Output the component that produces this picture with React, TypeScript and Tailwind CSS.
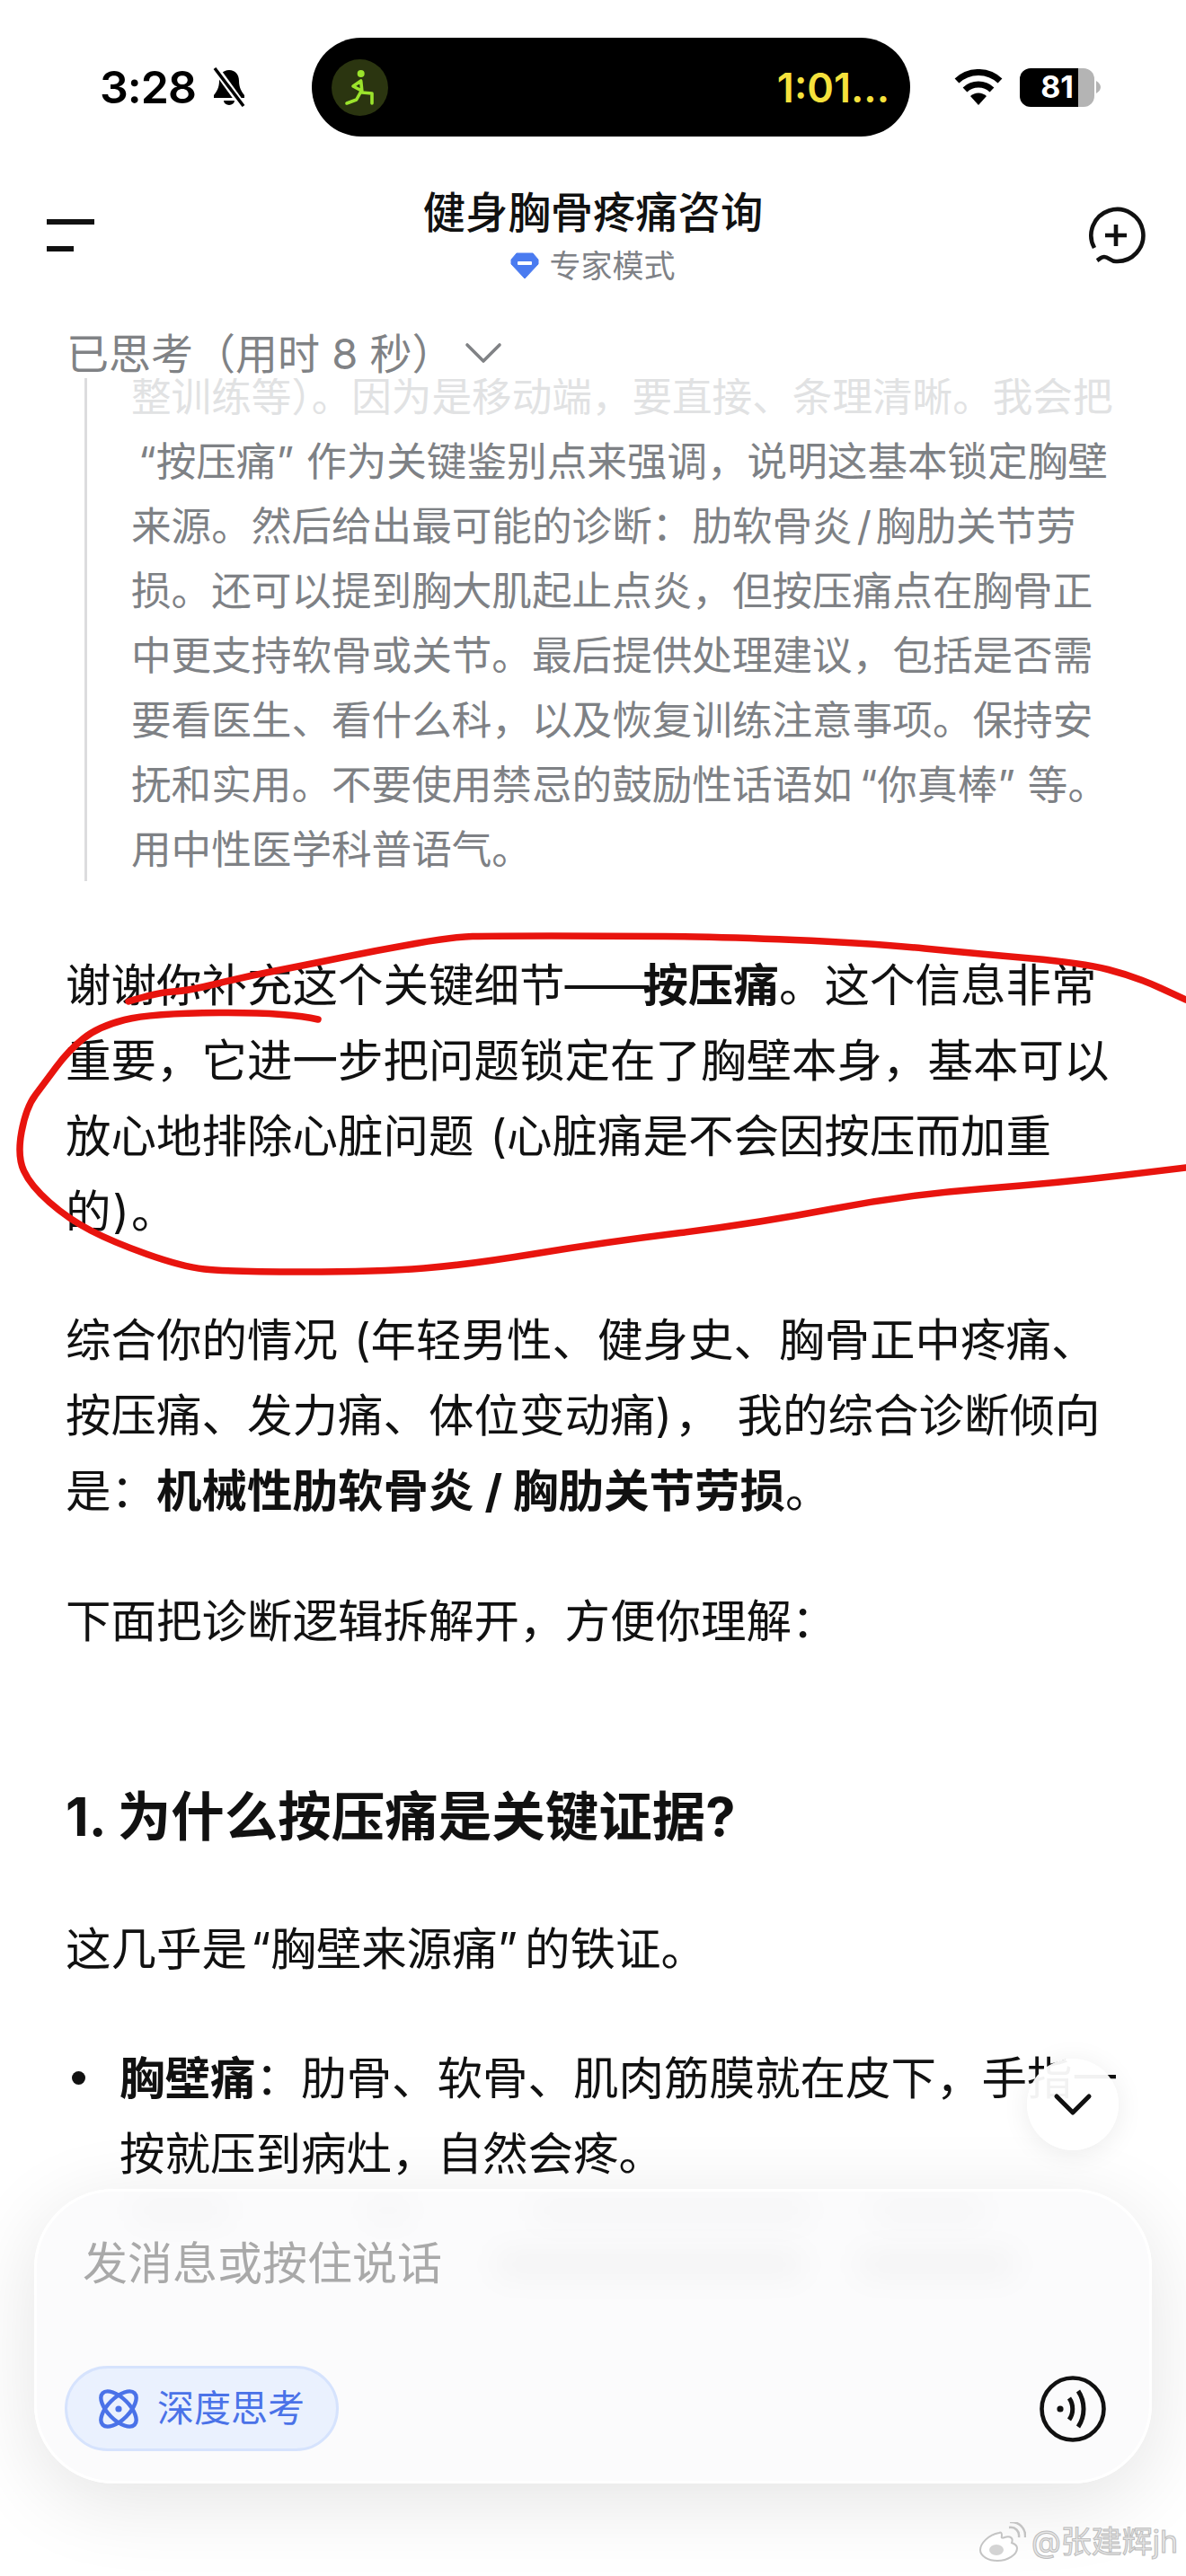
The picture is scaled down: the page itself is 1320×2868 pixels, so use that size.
import type { ReactNode } from 'react';
import { ChevronDown } from 'lucide-react';

const FONT = '[font-family:Inter,"Noto_Sans_CJK_SC",sans-serif]';

// quotes and brackets sit tighter/looser than the fallback font sets them
const Open = () => <span className="ml-[8px]">“</span>;
const Close = () => <span className="mr-[14px]">”</span>;
const Paren = () => <span className="ml-[18px]">(</span>;

const thinkingLines: ReactNode[] = [
  <span className="text-[#e1e2e3]">整训练等）。因为是移动端，要直接、条理清晰。我会把</span>,
  <><Open />按压痛<Close />作为关键鉴别点来强调，说明这基本锁定胸壁</>,
  <>来源。然后给出最可能的诊断：肋软骨炎<span className="mx-[5px]">/</span>胸肋关节劳</>,
  '损。还可以提到胸大肌起止点炎，但按压痛点在胸骨正',
  '中更支持软骨或关节。最后提供处理建议，包括是否需',
  '要看医生、看什么科，以及恢复训练注意事项。保持安',
  <>抚和实用。不要使用禁忌的鼓励性话语如<Open />你真棒<Close />等。</>,
  '用中性医学科普语气。',
];

// hand-traced pen strokes on top of the screenshot
const inkA = [[143, 1115], [175, 1105], [210, 1103], [270, 1088], [337, 1075], [420, 1058], [505, 1043], [547, 1042], [680, 1042], [800, 1043], [968, 1050], [1090, 1062], [1204, 1072], [1263, 1087], [1320, 1113]];
const inkB = [[354, 1135], [320, 1127], [168, 1128], [109, 1143], [76, 1170], [50, 1205], [29, 1233], [19, 1287], [34, 1320], [76, 1357], [126, 1383], [202, 1410], [253, 1416], [421, 1416], [522, 1408], [673, 1383], [842, 1362], [1010, 1330], [1178, 1317], [1320, 1300]];

function smooth(points: number[][]) {
  let d = `M${points[0][0]} ${points[0][1]}`;
  for (let i = 1; i < points.length - 1; i++) {
    const mx = (points[i][0] + points[i + 1][0]) / 2;
    const my = (points[i][1] + points[i + 1][1]) / 2;
    d += ` Q${points[i][0]} ${points[i][1]} ${mx} ${my}`;
  }
  const last = points[points.length - 1];
  return `${d} L${last[0]} ${last[1]}`;
}

function StatusBar() {
  return (
    <div className="mt-[42px] flex h-[110px] items-center pl-[111px]">
      <div className="flex w-[236px] items-center gap-[16px]">
        <span className="text-[50px] font-semibold leading-none tracking-[-1px] text-black">3:28</span>
        <svg width="42" height="44" viewBox="0 0 42 44">
          <path d="M21 3c-7 0-11 5-11 12 0 8-3 12-6 16v3h34v-3c-3-4-6-8-6-16 0-7-4-12-11-12z" fill="#000" />
          <path d="M15 37h12a6 5 0 0 1-12 0z" fill="#000" />
          <path d="M5 0l32 44" stroke="#fff" strokeWidth="8" />
          <path d="M5 1l32 42" stroke="#000" strokeWidth="3.5" />
        </svg>
      </div>
      <div className="flex h-[110px] w-[666px] items-center justify-between rounded-[55px] bg-black pl-[22px] pr-[23px]">
        <svg width="63" height="63" viewBox="0 0 63 63">
          <circle cx="31.5" cy="31.5" r="31.5" fill="#2b3510" />
          <circle cx="32.7" cy="16" r="4" fill="#9be32c" />
          <path d="M32.7 24L24 30l7.5 4M32.7 24L34 37M32.7 36L27.7 45 17 49M34 37l11 1v11" fill="none" stroke="#9be32c" strokeWidth="3.6" strokeLinecap="round" strokeLinejoin="round" />
        </svg>
        <span className="text-[45px] font-semibold leading-none text-[#f5e13c]">1:01...</span>
      </div>
      <div className="ml-[49px] flex items-center gap-[19px]">
        <svg width="54" height="40" viewBox="0 0 54 40">
          <path d="M3 13a35 35 0 0 1 48 0" fill="none" stroke="#000" strokeWidth="7" />
          <path d="M12 23a22 22 0 0 1 30 0" fill="none" stroke="#000" strokeWidth="7" />
          <path d="M18 30a13 13 0 0 1 18 0L27 40z" fill="#000" />
        </svg>
        <div className="flex items-center gap-[2px]">
          <div className="flex h-[43px] w-[83px] overflow-hidden rounded-[12px]">
            <div className="flex w-[65px] items-center justify-end bg-black pr-[5px] text-[34px] font-bold leading-none text-white">81</div>
            <div className="w-[18px] bg-[#b4b4b4]" />
          </div>
          <svg width="5" height="14" viewBox="0 0 5 14"><path d="M0 0c3 2 5 4 5 7s-2 5-5 7z" fill="#b4b4b4" /></svg>
        </div>
      </div>
    </div>
  );
}

function Header() {
  return (
    <div className="mt-[55px] grid grid-cols-[1fr_auto_1fr] items-center px-[42px]">
      <div className="ml-[10px] flex flex-col gap-[24px]">
        <div className="h-[6px] w-[53px] bg-[#111]" />
        <div className="h-[6px] w-[30px] bg-[#111]" />
      </div>
      <div className="flex flex-col items-center">
        <div className="text-[47.3px] font-medium leading-[60px] text-[#111]">健身胸骨疼痛咨询</div>
        <div className="mt-[9px] flex h-[40px] items-center gap-[11px]">
          <svg width="32" height="30" viewBox="0 0 32 30">
            <path d="M7 1h18l6 7v5L16 29 1 13V8z" fill="#4a7bf0" stroke="#4a7bf0" strokeLinejoin="round" />
            <rect x="8" y="10" width="16" height="4" rx="1" fill="#fff" />
          </svg>
          <span className="text-[35px] leading-none text-[#7f8287]">专家模式</span>
        </div>
      </div>
      <div className="flex justify-end">
        <svg width="72" height="72" viewBox="0 0 72 72" fill="none" stroke="#111" strokeWidth="4.6">
          <path d="M12 50A29 29 0 1 1 36 65C30 65 28 60 23 60C20 60 18 62 15 64" />
          <path d="M36 24v24M24 36h24" />
        </svg>
      </div>
    </div>
  );
}

function Thinking() {
  return (
    <>
      <div className="mt-[49px] flex h-[56px] items-center pl-[74px] text-[#808285]">
        <span className="text-[47px] leading-none">已思考（用时 8 秒）</span>
        <ChevronDown size={72} strokeWidth={1.2} className="-my-[8px] -ml-[4px]" />
      </div>
      <div className="relative ml-[94px] h-[560px] overflow-hidden border-l-[3px] border-[#dcdcde] pl-[49px]">
        <div className="-mt-[15px] text-[44.6px] leading-[72px] text-[#7e8185]">
          {thinkingLines.map((line, i) => (
            <div key={i} className="whitespace-nowrap">{line}</div>
          ))}
        </div>
        <div className="absolute -left-[3px] top-0 h-[75px] w-[3px] bg-gradient-to-b from-white to-white/0" />
      </div>
    </>
  );
}

function Answer() {
  const para = 'text-[50.5px] leading-[84px] text-[#111] whitespace-nowrap';
  return (
    <div className="px-[73px]">
      <p className={`mt-[74px] ${para}`}>
        谢谢你补充这个关键细节<span className="tracking-[-7px]">——</span><b className="font-bold">按压痛</b>。这个信息非常<br />
        重要，它进一步把问题锁定在了胸壁本身，基本可以<br />
        放心地排除心脏问题<Paren />心脏痛是不会因按压而加重<br />
        的<span className="ml-[2px] mr-[2px]">)</span>。
      </p>
      <p className={`mt-[59px] ${para}`}>
        综合你的情况<Paren />年轻男性、健身史、胸骨正中疼痛、<br />
        按压痛、发力痛、体位变动痛<span className="mr-[3px]">)</span>，<span className="ml-[19px]">我的综合诊断倾向</span><br />
        是：<b className="font-bold">机械性肋软骨炎 / 胸肋关节劳损</b>。
      </p>
      <p className={`mt-[61px] ${para}`}>下面把诊断逻辑拆解开，方便你理解：</p>
      <h2 className="mt-[133px] whitespace-nowrap text-[59.5px] font-bold leading-[84px] text-[#111]">1. 为什么按压痛是关键证据?</h2>
      <p className={`mt-[64px] ${para}`}>这几乎是<span className="ml-[4px]">“</span>胸壁来源痛<span className="mr-[8px]">”</span>的铁证。</p>
      <ul className="mt-[60px]">
        <li className={`relative pl-[60px] ${para}`}>
          <span className="absolute left-[7px] top-[34px] h-[15px] w-[15px] rounded-full bg-[#111]" />
          <b className="font-bold">胸壁痛</b>：肋骨、软骨、肌肉筋膜就在皮下，手指一<br />
          按就压到病灶，自然会疼。
        </li>
      </ul>
    </div>
  );
}

// faint smears where the answer text shows through the frosted input card
const smears = [
  'left-[105px] top-[6px] w-[110px] bg-black/[0.02]',
  'left-[366px] top-[6px] w-[50px] bg-black/[0.02]',
  'left-[551px] top-[6px] w-[310px] bg-black/[0.02]',
  'left-[930px] top-[6px] w-[126px] bg-black/[0.02]',
  'left-[509px] top-[66px] w-[345px] bg-black/[0.03]',
  'left-[913px] top-[66px] w-[177px] bg-black/[0.03]',
];

function InputCard() {
  return (
    <div className="absolute left-[38px] top-[2437px] flex h-[328px] w-[1244px] flex-col justify-between overflow-hidden rounded-[88px] border-[3px] border-white bg-[#fbfbfc] pb-[33px] pl-[31px] pr-[48px] pt-[50px]">
      {smears.map((s) => (
        <div key={s} className={`absolute h-[30px] rounded-full blur-lg ${s}`} />
      ))}
      <div className="relative pl-[20px] text-[50px] leading-[60px] text-[#a9a9a9]">发消息或按住说话</div>
      <div className="relative flex items-center justify-between">
        <div className="flex h-[95px] w-[305px] items-center gap-[21px] rounded-[48px] border-[3px] border-[#d6e3fd] bg-[#eaf1fe] pl-[35px]">
          <svg width="44" height="44" viewBox="0 0 44 44" fill="none" stroke="#4a72e8" strokeWidth="4.4">
            <ellipse cx="22" cy="22" rx="12" ry="25" transform="rotate(45 22 22)" />
            <ellipse cx="22" cy="22" rx="12" ry="25" transform="rotate(-45 22 22)" />
            <circle cx="22" cy="22" r="3.6" fill="#4a72e8" stroke="none" />
          </svg>
          <span className="text-[41px] leading-none text-[#4a72e8]">深度思考</span>
        </div>
        <svg width="74" height="74" viewBox="0 0 74 74" fill="none" stroke="#111" strokeWidth="4.6">
          <circle cx="37" cy="37" r="34.5" />
          <circle cx="23" cy="37" r="3.6" fill="#111" stroke="none" />
          <path d="M33 25c5 7 5 17 0 24" strokeWidth="5" />
          <path d="M43 17c8 12 8 28 0 40" strokeWidth="5" />
        </svg>
      </div>
    </div>
  );
}

export default function App() {
  return (
    <div className={`relative h-[2868px] w-[1320px] overflow-hidden bg-white ${FONT}`}>
      <StatusBar />
      <Header />
      <Thinking />
      <Answer />

      <svg className="pointer-events-none absolute left-0 top-0" width="1320" height="1500" fill="none" stroke="#e8140e" strokeWidth="7.5" strokeLinecap="round">
        <path d={smooth(inkA)} />
        <path d={smooth(inkB)} />
      </svg>

      <div className="absolute left-[38px] top-[2437px] h-[328px] w-[1244px] rounded-[88px] shadow-[0_20px_90px_rgba(0,0,0,0.11)]" />
      <InputCard />

      <div className="absolute left-[1143px] top-[2292px] flex h-[102px] w-[102px] items-center justify-center rounded-full bg-white/95 shadow-[0_4px_30px_rgba(0,0,0,0.08)]">
        <ChevronDown size={72} strokeWidth={1.7} className="text-[#111]" />
      </div>

      <div className="absolute left-[1090px] top-[2808px] flex items-center gap-[6px] whitespace-nowrap text-[34px] leading-none text-[#e6e6e6] [-webkit-text-stroke:1px_#bdbdbd]">
        <svg width="52" height="44" viewBox="0 0 52 44">
          <path d="M22 12C10 14 1 24 1 31c0 7 9 12 19 12 12 0 22-7 22-14 0-4-4-5-6-6 2-5-1-8-8-6-2 1-4 1-3-2 0-3-1-4-3-3z" fill="#fff" stroke="#c4c4c4" strokeWidth="2" />
          <ellipse cx="19" cy="31" rx="8" ry="6" fill="#d4d4d4" />
          <path d="M33 6c7-1 12 4 11 11M34 0c10-1 18 7 17 17" fill="none" stroke="#c4c4c4" strokeWidth="2.5" />
        </svg>
        <span>@张建辉jh</span>
      </div>
    </div>
  );
}
